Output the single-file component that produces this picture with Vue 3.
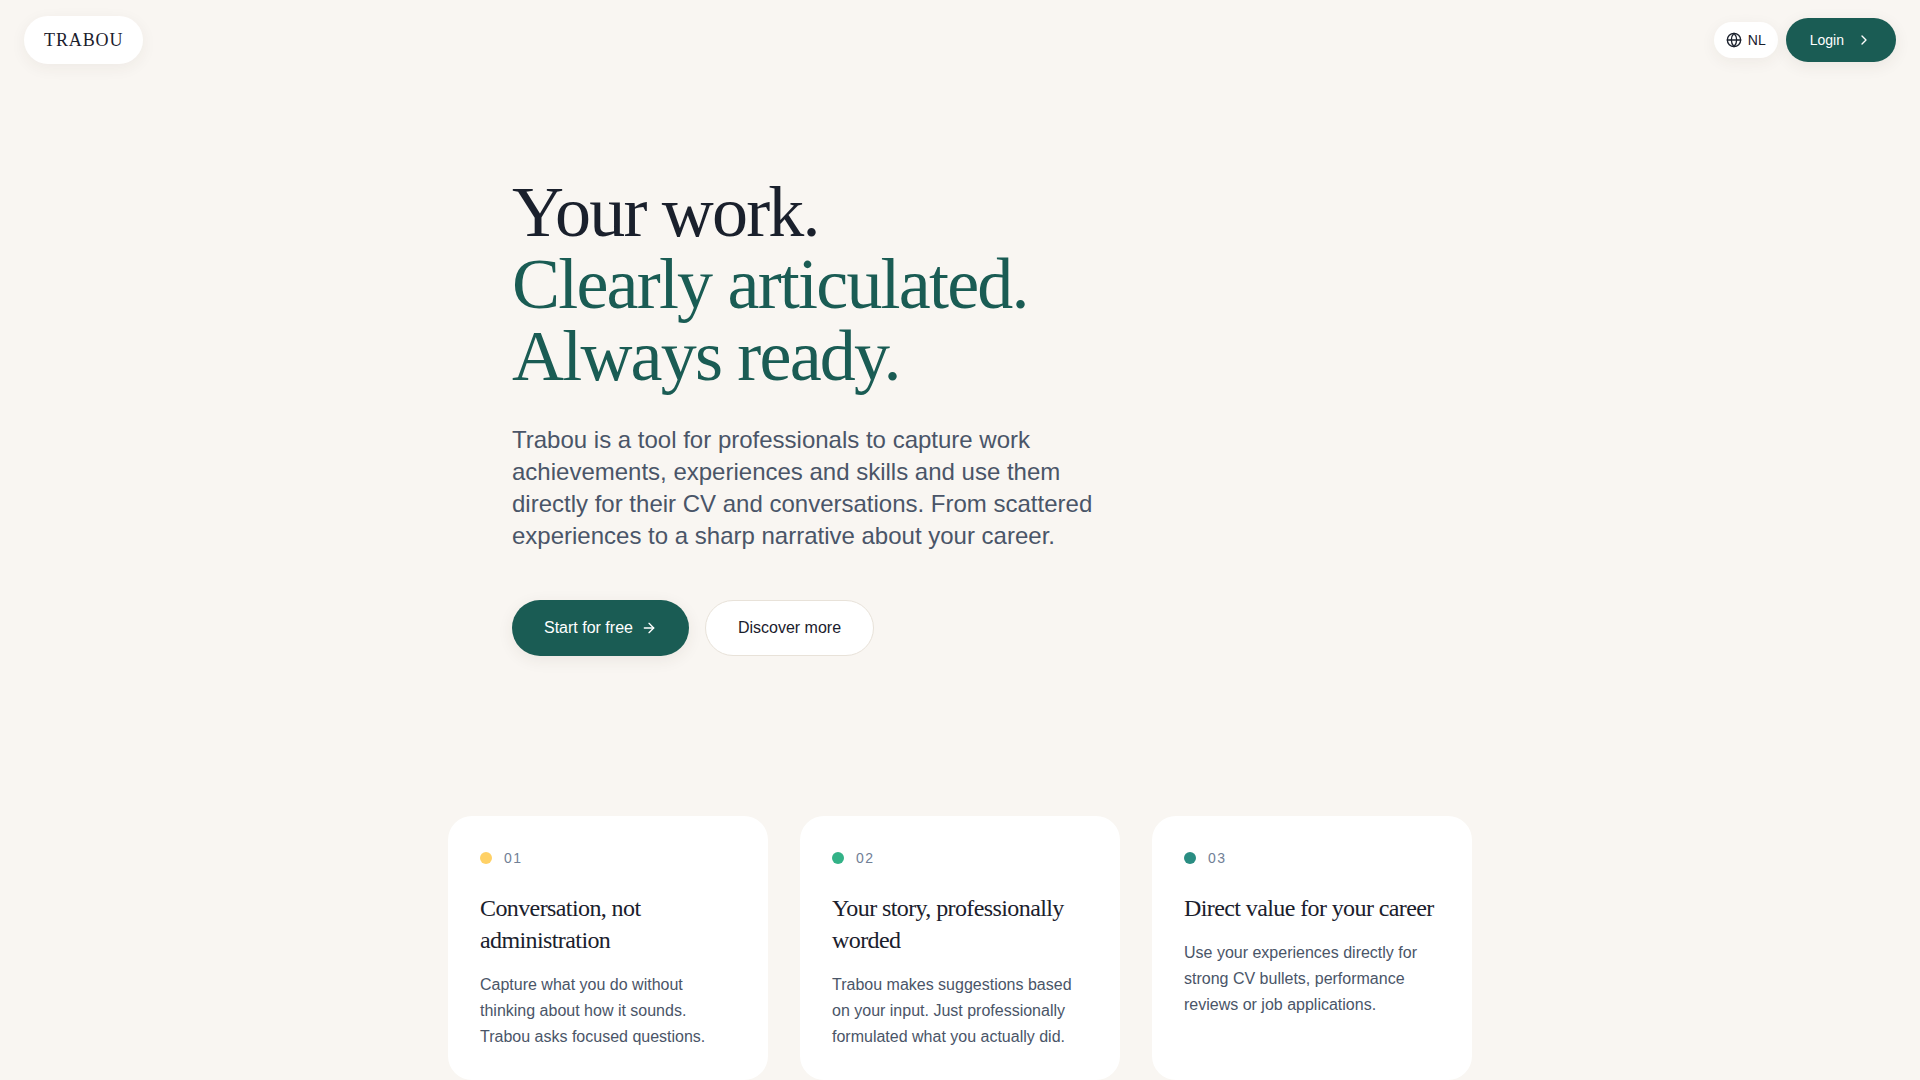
<script setup>
const cards = [
  { n: '01', color: '#ffd166', title: 'Conversation, not administration', text: 'Capture what you do without thinking about how it sounds. Trabou asks focused questions.' },
  { n: '02', color: '#33b287', title: 'Your story, professionally worded', text: 'Trabou makes suggestions based on your input. Just professionally formulated what you actually did.' },
  { n: '03', color: '#2a8d82', title: 'Direct value for your career', text: 'Use your experiences directly for strong CV bullets, performance reviews or job applications.' },
]
</script>

<template>
  <div class="page">
    <header class="topbar">
      <div class="logo">TRABOU</div>
      <div class="actions">
        <button class="lang">
          <svg width="16" height="16" viewBox="0 0 24 24" fill="none" stroke="currentColor" stroke-width="2" stroke-linecap="round" stroke-linejoin="round"><circle cx="12" cy="12" r="10"/><path d="M12 2a14.5 14.5 0 0 0 0 20 14.5 14.5 0 0 0 0-20"/><path d="M2 12h20"/></svg>
          <span>NL</span>
        </button>
        <button class="login">
          <span>Login</span>
          <svg width="16" height="16" viewBox="0 0 24 24" fill="none" stroke="currentColor" stroke-width="2" stroke-linecap="round" stroke-linejoin="round"><path d="m9 18 6-6-6-6"/></svg>
        </button>
      </div>
    </header>

    <section class="hero">
      <h1>Your work.<br><span class="accent">Clearly articulated.<br>Always ready.</span></h1>
      <p class="lead">Trabou is a tool for professionals to capture work achievements, experiences and skills and use them directly for their CV and conversations. From scattered experiences to a sharp narrative about your career.</p>
      <div class="cta">
        <button class="primary">
          <span>Start for free</span>
          <svg width="16" height="16" viewBox="0 0 24 24" fill="none" stroke="currentColor" stroke-width="2" stroke-linecap="round" stroke-linejoin="round"><path d="M5 12h14"/><path d="m12 5 7 7-7 7"/></svg>
        </button>
        <button class="secondary">Discover more</button>
      </div>
    </section>

    <section class="cards">
      <article v-for="c in cards" :key="c.n" class="card">
        <div class="tag"><i class="dot" :style="{ background: c.color }"></i><span>{{ c.n }}</span></div>
        <h3>{{ c.title }}</h3>
        <p>{{ c.text }}</p>
      </article>
    </section>
  </div>
</template>

<style>
html, body { margin: 0; background: #f9f6f2; }
html { overflow: hidden; height: 100%; }
</style>

<style scoped>
.page {
  height: 1080px;
  overflow: hidden;
  background: #f9f6f2;
  font-family: "Liberation Sans", Arial, sans-serif;
  color: #1a202c;
}
button { font: inherit; border: 0; cursor: pointer; }
.topbar {
  display: flex;
  justify-content: space-between;
  align-items: center;
  padding: 16px 24px 0;
  height: 48px;
}
.logo {
  height: 48px;
  box-sizing: border-box;
  display: flex;
  align-items: center;
  padding: 0 20px;
  border-radius: 24px;
  background: #fff;
  font-family: "Liberation Serif", serif;
  font-size: 18px;
  letter-spacing: 0.9px;
  box-shadow: 0 4px 16px rgba(60, 50, 40, 0.06);
}
.actions { display: flex; align-items: center; gap: 8px; }
.lang {
  height: 36px;
  display: flex;
  align-items: center;
  gap: 6px;
  padding: 0 12px;
  border-radius: 18px;
  background: #fff;
  color: #1a202c;
  font-size: 14px;
  box-shadow: 0 4px 16px rgba(60, 50, 40, 0.06);
}
.login {
  height: 44px;
  display: flex;
  align-items: center;
  gap: 12px;
  padding: 0 24px;
  border-radius: 22px;
  background: #1a5c54;
  color: #fff;
  font-size: 14px;
  box-shadow: 0 4px 16px rgba(60, 50, 40, 0.08);
}
.hero {
  width: 600px;
  margin-left: 512px;
  padding-top: 112px;
}
h1 {
  margin: 0;
  font-family: "Liberation Serif", serif;
  font-weight: 400;
  font-size: 72px;
  line-height: 72px;
  letter-spacing: -1.8px;
  color: #1a202c;
}
.accent { color: #1a5c54; }
.lead {
  margin: 32px 0 0;
  font-size: 24px;
  line-height: 32px;
  color: #4a5568;
}
.cta { display: flex; gap: 16px; margin-top: 48px; }
.primary, .secondary {
  height: 56px;
  border-radius: 28px;
  font-size: 16px;
  display: flex;
  align-items: center;
}
.primary {
  gap: 8px;
  padding: 0 32px;
  background: #1a5c54;
  color: #fff;
  box-shadow: 0 4px 16px rgba(60, 50, 40, 0.08);
}
.secondary {
  padding: 0 32px;
  background: #fff;
  color: #1a202c;
  border: 1px solid #e8e2d9;
}
.cards {
  display: grid;
  grid-template-columns: repeat(3, 320px);
  gap: 32px;
  justify-content: center;
  margin-top: 160px;
}
.card {
  background: #fff;
  border-radius: 24px;
  padding: 32px;
  height: 264px;
  box-sizing: border-box;
}
.tag {
  display: flex;
  align-items: center;
  gap: 12px;
  font-size: 14px;
  line-height: 20px;
  letter-spacing: 1.4px;
  color: #718096;
}
.dot { width: 12px; height: 12px; border-radius: 50%; }
h3 {
  margin: 24px 0 0;
  font-family: "Liberation Serif", serif;
  font-weight: 400;
  font-size: 24px;
  line-height: 32px;
  letter-spacing: -0.6px;
  color: #1a202c;
}
.card p {
  margin: 16px 0 0;
  font-size: 16px;
  line-height: 26px;
  color: #4a5568;
}
</style>
